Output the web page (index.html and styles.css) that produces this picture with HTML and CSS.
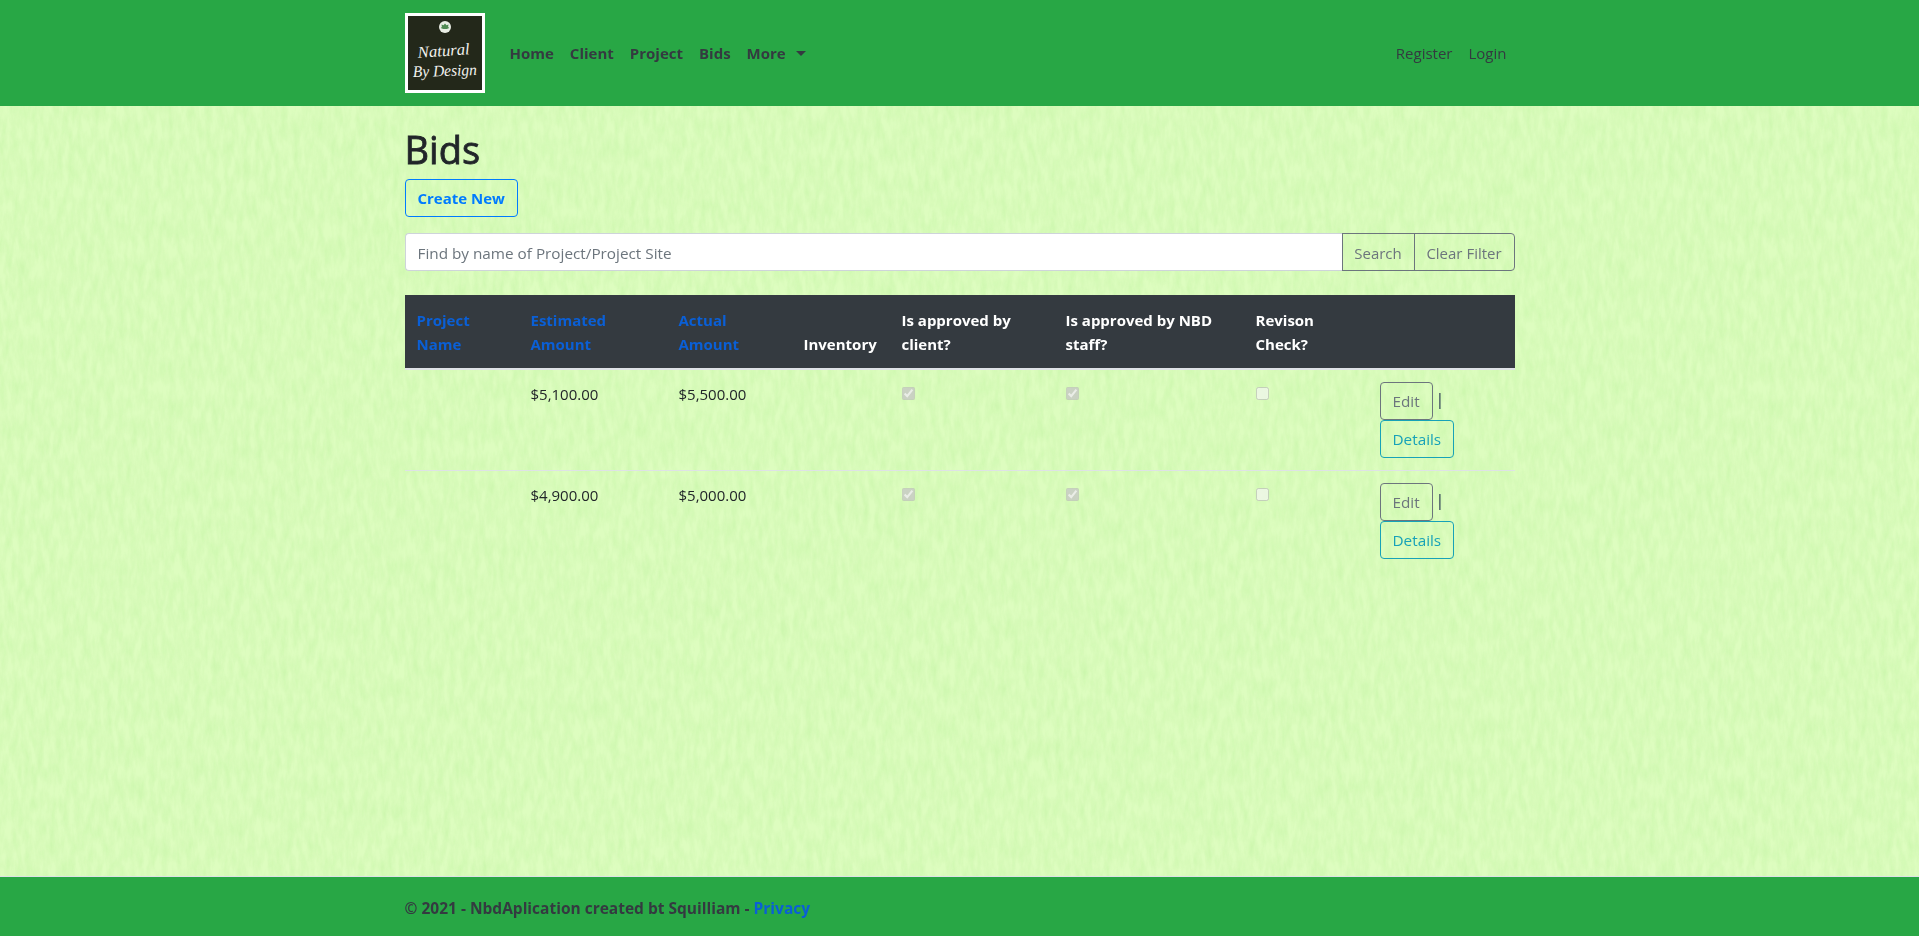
FILE: index.html
```html
<!DOCTYPE html>
<html lang="en">
<head>
<meta charset="utf-8">
<title>Bids</title>
<link rel="stylesheet" href="styles.css">
</head>
<body>
<svg class="texture" width="100%" height="100%" aria-hidden="true">
  <filter id="paper" x="0" y="0" width="100%" height="100%" color-interpolation-filters="sRGB">
    <feTurbulence type="fractalNoise" baseFrequency="0.16 0.05" numOctaves="3" seed="7"/>
    <feColorMatrix type="matrix" values="0 0 0 0 0.78  0 0 0 0 0.96  0 0 0 0 0.66  1.1 0 0 0 -0.32"/>
  </filter>
  <rect width="100%" height="100%" filter="url(#paper)"/>
</svg>
<div class="page">
  <header class="topbar">
    <nav class="container nav">
      <a class="brand" href="#">
        <svg class="logo" viewBox="0 0 74 74" width="74" height="74">
          <rect width="74" height="74" fill="#23281a"/>
          <circle cx="37" cy="11" r="6" fill="#e9eee4"/>
          <path d="M37 7.500l1.500 1.800 2-.8-.4 2.600 1.200 1-2.500 1h-3.600l-2.500-1 1.200-1-.4-2.600 2 .8z" fill="#4f8a52"/>
          <text class="logo-text" x="36" y="40" text-anchor="middle" textLength="52" lengthAdjust="spacingAndGlyphs" transform="rotate(-4 36 40)">Natural</text>
          <text class="logo-text" x="37" y="60" text-anchor="middle" textLength="64" lengthAdjust="spacingAndGlyphs" transform="rotate(-2 37 60)">By Design</text>
        </svg>
      </a>
      <ul class="menu">
        <li><a href="#">Home</a></li>
        <li><a href="#">Client</a></li>
        <li><a href="#">Project</a></li>
        <li><a href="#">Bids</a></li>
        <li><a href="#" class="dropdown">More</a></li>
      </ul>
      <ul class="account">
        <li><a href="#">Register</a></li>
        <li><a href="#">Login</a></li>
      </ul>
    </nav>
  </header>
  <main class="container content">
    <h1>Bids</h1>
    <a class="btn btn-create" href="#">Create New</a>
    <form class="search">
      <input type="text" placeholder="Find by name of Project/Project Site">
      <button type="button" class="btn-group-item first">Search</button>
      <button type="button" class="btn-group-item last">Clear Filter</button>
    </form>
    <table>
      <colgroup>
        <col class="c1"><col class="c2"><col class="c3"><col class="c4"><col class="c5"><col class="c6"><col class="c7"><col class="c8">
      </colgroup>
      <thead>
        <tr>
          <th><a href="#">Project Name</a></th>
          <th><a href="#">Estimated Amount</a></th>
          <th><a href="#">Actual Amount</a></th>
          <th>Inventory</th>
          <th>Is approved by client?</th>
          <th>Is approved by NBD staff?</th>
          <th>Revison Check?</th>
          <th></th>
        </tr>
      </thead>
      <tbody>
        <tr>
          <td></td>
          <td>$5,100.00</td>
          <td>$5,500.00</td>
          <td></td>
          <td><input type="checkbox" checked disabled></td>
          <td><input type="checkbox" checked disabled></td>
          <td><input type="checkbox" disabled></td>
          <td class="actions"><a class="btn btn-edit" href="#">Edit</a> <span class="sep">|</span><br><a class="btn btn-details" href="#">Details</a></td>
        </tr>
        <tr>
          <td></td>
          <td>$4,900.00</td>
          <td>$5,000.00</td>
          <td></td>
          <td><input type="checkbox" checked disabled></td>
          <td><input type="checkbox" checked disabled></td>
          <td><input type="checkbox" disabled></td>
          <td class="actions"><a class="btn btn-edit" href="#">Edit</a> <span class="sep">|</span><br><a class="btn btn-details" href="#">Details</a></td>
        </tr>
      </tbody>
    </table>
  </main>
  <footer class="footer">
    <div class="container">© 2021 - NbdAplication created bt Squilliam - <a href="#">Privacy</a></div>
  </footer>
</div>
</body>
</html>
```
FILE: styles.css
```css
* { box-sizing: border-box; }
html, body { height: 100%; }
body {
  margin: 0;
  background: #ddfdbf;
  color: #212529;
  font-family: "Open Sans", "Noto Sans", sans-serif;
  font-size: 15px;
  line-height: 24px;
}
a { text-decoration: none; }
.texture { position: fixed; inset: 0; z-index: 0; }
.page {
  position: relative;
  z-index: 1;
  min-height: 100%;
  display: flex;
  flex-direction: column;
}
.container { width: 1140px; margin: 0 auto; padding: 0 15px; }
.topbar { background: #28a745; height: 106px; flex: none; }
.nav { display: flex; align-items: center; height: 106px; }
.brand { display: block; width: 80px; height: 80px; border: 3px solid #fff; margin-right: 17px; }
.logo { display: block; }
.logo-text { font-family: "Liberation Serif", serif; font-style: italic; font-size: 16px; fill: #f2f2ee; }
.menu, .account { list-style: none; margin: 0; padding: 0; display: flex; }
.menu a { display: block; padding: 8px; font-weight: 700; color: #343a40; }
.dropdown::after {
  content: "";
  display: inline-block;
  margin-left: 10px;
  vertical-align: 3px;
  border-top: 5px solid;
  border-left: 5px solid transparent;
  border-right: 5px solid transparent;
}
.account { margin-left: auto; }
.account a { display: block; padding: 8px; color: #343a40; }
.content { flex: 1; }
h1 { margin: 19px 0 6px; font-size: 38px; line-height: 48px; font-weight: 400; -webkit-text-stroke: 0.8px #212529; }
.btn { display: inline-block; padding: 6px 12px; border: 1px solid; border-radius: 4px; height: 38px; line-height: 24px; }
.btn-create { border-color: #007bff; color: #007bff; font-weight: 700; }
.search { display: flex; margin: 16px 0 24px; height: 38px; }
.search input {
  flex: 1;
  min-width: 0;
  padding: 7px 12px 5px;
  border: 1px solid #ced4da;
  border-right: 0;
  border-radius: 4px 0 0 4px;
  background: #fff;
  font: inherit;
  font-size: 15.3px;
  color: #495057;
}
.search input::placeholder { color: #6c757d; opacity: 1; }
.btn-group-item {
  padding: 7px 0 5px;
  background: transparent;
  border: 1px solid #6c757d;
  font: inherit;
  color: #6c757d;
}
.btn-group-item.first { width: 73px; }
.btn-group-item.last { width: 101px; margin-left: -1px; border-radius: 0 4px 4px 0; }
table { width: 1110px; border-collapse: collapse; table-layout: fixed; }
.c1 { width: 114px; } .c2 { width: 148px; } .c3 { width: 125px; } .c4 { width: 98px; }
.c5 { width: 164px; } .c6 { width: 190px; } .c7 { width: 124px; } .c8 { width: 147px; }
th {
  padding: 13px 12px 12px;
  background: #343a40;
  border-bottom: 2px solid #dee2e6;
  color: #fff;
  font-weight: 700;
  text-align: left;
  vertical-align: bottom;
}
th a { color: #0a5fd6; }
td { padding: 12px; border-top: 1px solid #dee2e6; vertical-align: top; }
tbody tr:first-child td { border-top: 0; }
td input { margin: 0; width: 13px; height: 13px; }
.actions { line-height: 0; }
.actions .btn { color: #6c757d; font-size: 15.3px; }
.btn-edit { border-color: #6c757d; }
.btn-details { border-color: #17a2b8; }
.actions .btn-details { color: #17a2b8; }
.sep { color: #1b2a4a; font-size: 16px; line-height: 24px; vertical-align: 2px; margin-left: -1px; }
.footer { height: 60px; flex: none; background: #28a745; border-top: 1px solid #dee2e6; padding-top: 4px; line-height: 55px; font-size: 15.5px; font-weight: 700; color: #343a40; white-space: nowrap; }
.footer a { color: #0a5fd6; }
```
